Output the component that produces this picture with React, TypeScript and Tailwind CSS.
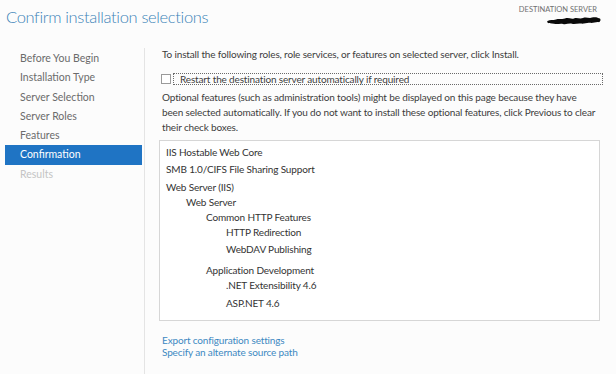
import React from "react";

interface Step {
  label: string;
  state: "done" | "active" | "todo";
}

interface Selection {
  text: string;
  className: string;
}

const steps: Step[] = [
  { label: "Before You Begin", state: "done" },
  { label: "Installation Type", state: "done" },
  { label: "Server Selection", state: "done" },
  { label: "Server Roles", state: "done" },
  { label: "Features", state: "done" },
  { label: "Confirmation", state: "active" },
  { label: "Results", state: "todo" },
];

// indent + spacing per row, matching the wizard's tree layout
const selections: Selection[] = [
  { text: "IIS Hostable Web Core", className: "pl-0 mt-0" },
  { text: "SMB 1.0/CIFS File Sharing Support", className: "pl-0 mt-[2px]" },
  { text: "Web Server (IIS)", className: "pl-0 mt-[3px]" },
  { text: "Web Server", className: "pl-[20px] mt-0" },
  { text: "Common HTTP Features", className: "pl-[40px] mt-0" },
  { text: "HTTP Redirection", className: "pl-[60px] mt-0" },
  { text: "WebDAV Publishing", className: "pl-[60px] mt-[2px]" },
  { text: "Application Development", className: "pl-[40px] mt-[6px]" },
  { text: ".NET Extensibility 4.6", className: "pl-[60px] mt-0" },
  { text: "ASP.NET 4.6", className: "pl-[60px] mt-[3px]" },
];

function StepNav() {
  return (
    <nav className="w-[144px] shrink-0 pt-[9px] pl-[5px] pr-[2px]">
      {steps.map((s) => (
        <div
          key={s.label}
          className={
            s.state === "active"
              ? "h-[19.3px] leading-[19.3px] pl-[15px] bg-[#1f74c4] text-white"
              : s.state === "todo"
              ? "h-[19.3px] leading-[19.3px] pl-[15px] text-[#c4c4c4]"
              : "h-[19.3px] leading-[19.3px] pl-[15px] text-[#6b6b6b]"
          }
        >
          {s.label}
        </div>
      ))}
    </nav>
  );
}

export default function App() {
  return (
    <div className="w-[616px] h-[374px] overflow-hidden bg-[#fcfcfc] font-['Lato','Noto_Sans',sans-serif] text-[10.5px] text-[#3d3d3d] flex flex-col">
      {/* header */}
      <div className="h-[40px] shrink-0 flex justify-between items-start">
        <h1 className="pl-[6px] pt-[4px] font-light text-[16.5px] tracking-[-0.35px] leading-[26px] text-[#3d84b8]">
          Confirm installation selections
        </h1>
        <div className="pr-[19px] pt-[5px] flex flex-col items-end">
          <span className="text-[7.5px] leading-[10px] font-normal text-[#707070]">DESTINATION SERVER</span>
          {/* redacted server name */}
          <svg width="54" height="9" viewBox="0 0 54 9" className="mr-[-4px] mt-[1px] shrink-0">
            <path
              d="M0.5 5 C3 3.2 6 4.4 9 3.4 C12 2.2 15 3.6 18 2.6 C21 1.2 24 3.4 27 2.4 C30 1.4 33 3.2 36 2 C39 0.6 42 2.6 45 1.6 C48 0.6 51 1.4 53 2.6 C54 4 53.5 5.4 52 6.2 C49 5.6 46 7.4 43 6.8 C40 6.2 37 8.2 34 7.6 C31 7 28 8.6 25 7.8 C22 7 19 8.8 16 8 C13 7.4 10 8.6 7 7.8 C4 7.2 2 7.6 0.8 6.8 C0 6.2 0 5.6 0.5 5 Z"
              fill="#0a0a0a"
            />
          </svg>
        </div>
      </div>

      <div className="flex flex-1">
        <StepNav />

        <div className="relative flex-1 flex flex-col pl-[15px] pr-[13px] pt-[6.5px] text-[10px] tracking-[-0.15px]">
          <div className="absolute left-0 top-[8px] bottom-0 w-px bg-[#e4e4e4]" />

          <p className="pl-[3px] leading-[15px]">
            To install the following roles, role services, or features on selected server, click Install.
          </p>

          <label className="mt-[11px] flex items-center h-[12px]">
            <span className="ml-[2px] w-[10px] h-[10px] border border-[#9a9a9a] bg-white shrink-0" />
            <span className="ml-[2px] flex-1 h-[12px] leading-[11px] pl-[6px] border border-dotted border-[#6a6a6a]">
              Restart the destination server automatically if required
            </span>
          </label>

          <p className="mt-[5px] pl-[3px] leading-[15px] whitespace-nowrap">
            Optional features (such as administration tools) might be displayed on this page because they have
            <br />
            been selected automatically. If you do not want to install these optional features, click Previous to clear
            <br />
            their check boxes.
          </p>

          <div className="mt-[5.5px] w-[441px] h-[181px] shrink-0 border border-[#d6d6d6] bg-white pl-[6px] pt-[3.5px] text-[#333333]">
            {selections.map((item) => (
              <div key={item.text} className={"leading-[15px] " + item.className}>
                {item.text}
              </div>
            ))}
          </div>

          <div className="mt-[13px] pl-[3px] flex flex-col leading-[12px] text-[#3c89c2]">
            <a href="#" className="w-fit">Export configuration settings</a>
            <a href="#" className="w-fit">Specify an alternate source path</a>
          </div>
        </div>
      </div>
    </div>
  );
}
